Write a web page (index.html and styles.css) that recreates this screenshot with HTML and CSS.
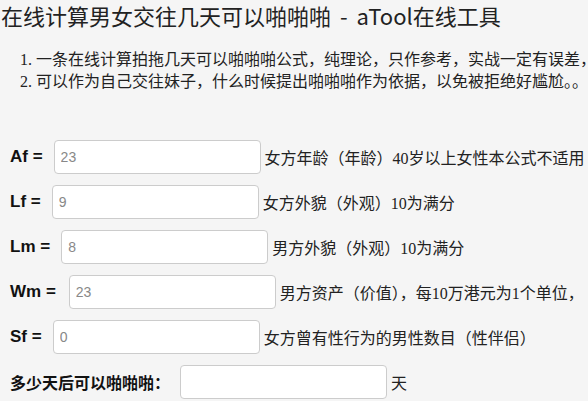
FILE: index.html
```html
<!DOCTYPE html>
<html lang="zh-CN">
<head>
<meta charset="utf-8">
<title>在线计算男女交往几天可以啪啪啪 - aTool在线工具</title>
<link rel="stylesheet" href="styles.css">
</head>
<body>
<h1 class="title">在线计算男女交往几天可以啪啪啪 - aTool在线工具</h1>
<ol class="notes">
  <li>一条在线计算拍拖几天可以啪啪啪公式，纯理论，只作参考，实战一定有误差，</li>
  <li>可以作为自己交往妹子，什么时候提出啪啪啪作为依据，以免被拒绝好尴尬。。</li>
</ol>
<form class="calc">
  <div class="row"><label class="var">Af =</label><input class="field" type="text" value="23"><span class="desc">女方年龄（年龄）40岁以上女性本公式不适用</span></div>
  <div class="row"><label class="var">Lf =</label><input class="field" type="text" value="9"><span class="desc">女方外貌（外观）10为满分</span></div>
  <div class="row"><label class="var">Lm =</label><input class="field" type="text" value="8"><span class="desc">男方外貌（外观）10为满分</span></div>
  <div class="row"><label class="var var-wide">Wm =</label><input class="field" type="text" value="23"><span class="desc">男方资产（价值），每10万港元为1个单位，</span></div>
  <div class="row"><label class="var">Sf =</label><input class="field" type="text" value="0"><span class="desc">女方曾有性行为的男性数目（性伴侣）</span></div>
  <div class="row"><label class="var result-label">多少天后可以啪啪啪：</label><input class="field" type="text" value=""><span class="desc">天</span></div>
</form>
</body>
</html>
```
FILE: styles.css
```css
html, body {
  margin: 0;
  padding: 0;
  background: #f5f5f5;
  overflow: hidden;
}
body {
  width: 588px;
  height: 401px;
  color: #333;
  font-family: "Liberation Serif", "Noto Sans CJK SC", serif;
}
.title {
  margin: 0;
  padding: 0 0 0 1px;
  font-family: "Noto Sans CJK SC", sans-serif;
  font-weight: normal;
  font-size: 22px;
  line-height: 30px;
  word-spacing: 4px;
  color: #222;
  white-space: nowrap;
}
.notes {
  margin: 19px 0 0 0;
  padding: 0 0 0 20px;
  list-style-position: inside;
  font-size: 16px;
  line-height: 21.5px;
  white-space: nowrap;
  color: #222;
}
.calc {
  margin: 0;
  padding: 48px 0 0 10px;
}
.row {
  display: flex;
  align-items: center;
  height: 34px;
  margin-bottom: 11px;
  white-space: nowrap;
}
.var {
  font-family: "Liberation Sans", "Noto Sans CJK SC", sans-serif;
  font-weight: bold;
  font-size: 17px;
  color: #111;
  margin-right: 11px;
}
.var-wide {
  margin-right: 13px;
}
.result-label {
  font-family: "Noto Sans CJK SC", sans-serif;
  font-size: 16px;
  margin-right: 10px;
}
.field {
  box-sizing: border-box;
  width: 207px;
  height: 34px;
  margin: 0;
  padding: 0 6px;
  border: 1px solid #ccc;
  border-radius: 4px;
  background: #fff;
  font-family: "Liberation Sans", sans-serif;
  font-size: 14px;
  color: #888;
  outline: none;
}
.desc {
  margin-left: 4px;
  font-size: 16px;
  color: #222;
}
```
